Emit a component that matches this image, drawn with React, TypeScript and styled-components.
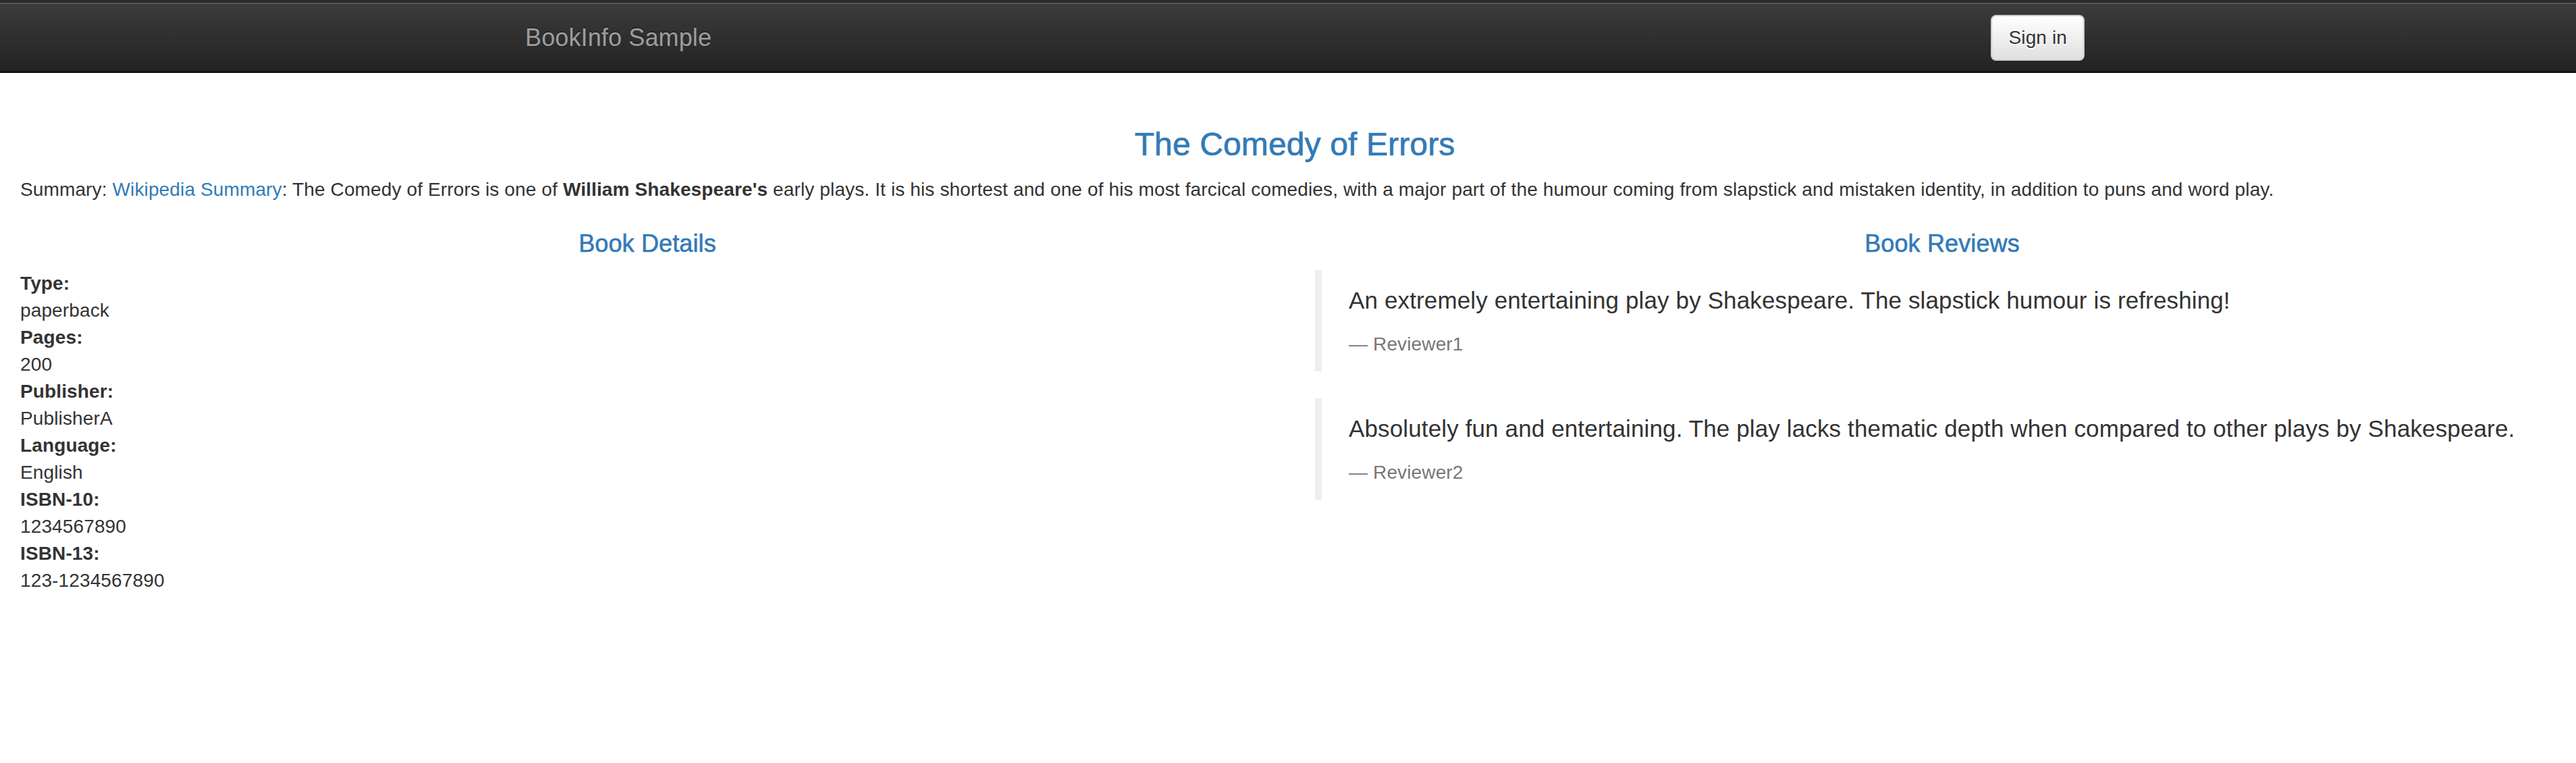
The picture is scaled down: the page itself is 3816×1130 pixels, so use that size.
import React from "react";
import styled, { createGlobalStyle } from "styled-components";

const GlobalStyle = createGlobalStyle`
  html, body {
    margin: 0;
    padding: 0;
    background: #fff;
    overflow-x: hidden;
  }
  body {
    font-family: "Liberation Sans", Arial, Helvetica, sans-serif;
    font-size: 28px;
    line-height: 1.42857143;
    letter-spacing: 0.13px;
    color: #333;
  }
  * { box-sizing: border-box; }
`;

const Page = styled.div`
  width: 3836px;
`;

const Navbar = styled.nav`
  border-top: 4px solid #2b2b2b;
  padding-top: 2px;
  min-height: 104px;
  border-bottom: 2px solid #080808;
  background-image: linear-gradient(to bottom, #3c3c3c 0%, #222 100%);
  box-shadow: inset 0 2px 0 #575757;
  margin-bottom: 40px;
`;

const NavContainer = styled.div`
  width: 2340px;
  margin: 0 auto;
  padding: 0 30px;
  display: flex;
  justify-content: space-between;
  align-items: flex-start;
`;

const Brand = styled.a`
  display: block;
  margin-left: -30px;
  padding: 30px;
  height: 100px;
  font-size: 36px;
  line-height: 40px;
  color: #9d9d9d;
  text-decoration: none;
  text-shadow: 0 -2px 0 rgba(0, 0, 0, 0.25);
`;

const NavRight = styled.div`
  margin-right: -30px;
  padding: 16px 0;
`;

const SignInButton = styled.button`
  font-family: inherit;
  font-size: 28px;
  line-height: 40px;
  letter-spacing: 0.13px;
  padding: 12px 24px;
  color: #333;
  border: 2px solid #ccc;
  border-radius: 8px;
  background-image: linear-gradient(to bottom, #fff 0%, #e0e0e0 100%);
  text-shadow: 0 2px 0 #fff;
  box-shadow: inset 0 2px 0 rgba(255, 255, 255, 0.15), 0 2px 2px rgba(0, 0, 0, 0.075);
  cursor: pointer;
`;

const Main = styled.main`
  display: flow-root;
  padding: 0 30px;
`;

const Title = styled.h3`
  margin: 40px 0 20px;
  font-size: 48px;
  line-height: 1.1;
  font-weight: 500;
  text-align: center;
  color: #337ab7;
  -webkit-text-stroke: 0.7px #337ab7;
`;

const Summary = styled.p`
  margin: 0 0 20px;
`;

const Link = styled.a`
  color: #337ab7;
  text-decoration: none;
`;

const Columns = styled.div`
  display: grid;
  grid-template-columns: 1fr 1fr;
  column-gap: 60px;
`;

const Column = styled.section`
  min-width: 0;
`;

const SectionTitle = styled.h4`
  margin: 20px 0 20px;
  font-size: 36px;
  line-height: 1.1;
  font-weight: 500;
  text-align: center;
  color: #337ab7;
  -webkit-text-stroke: 0.6px #337ab7;
`;

const DetailList = styled.dl`
  margin: 0 0 40px;
`;

const Term = styled.dt`
  font-weight: 700;
  line-height: 1.42857143;
`;

const Value = styled.dd`
  margin: 0;
  line-height: 1.42857143;
`;

const Review = styled.blockquote`
  margin: 0 0 40px;
  padding: 20px 40px;
  border-left: 10px solid #eee;
  font-size: 35px;
`;

const ReviewText = styled.p`
  margin: 0 0 20px;
  line-height: 1.42857143;
`;

const Reviewer = styled.small`
  display: block;
  font-size: 80%;
  line-height: 1.42857143;
  color: #777;
  &::before {
    content: "\\2014 \\00A0";
  }
`;

const details: [string, string][] = [
  ["Type:", "paperback"],
  ["Pages:", "200"],
  ["Publisher:", "PublisherA"],
  ["Language:", "English"],
  ["ISBN-10:", "1234567890"],
  ["ISBN-13:", "123-1234567890"],
];

const reviews = [
  {
    text: "An extremely entertaining play by Shakespeare. The slapstick humour is refreshing!",
    reviewer: "Reviewer1",
  },
  {
    text: "Absolutely fun and entertaining. The play lacks thematic depth when compared to other plays by Shakespeare.",
    reviewer: "Reviewer2",
  },
];

export default function App() {
  return (
    <Page>
      <GlobalStyle />
      <Navbar>
        <NavContainer>
          <Brand href="#">BookInfo Sample</Brand>
          <NavRight>
            <SignInButton type="button">Sign in</SignInButton>
          </NavRight>
        </NavContainer>
      </Navbar>
      <Main>
        <Title>The Comedy of Errors</Title>
        <Summary>
          Summary: <Link href="#">Wikipedia Summary</Link>: The Comedy of Errors is one of{" "}
          <b>William Shakespeare's</b> early plays. It is his shortest and one of his most farcical
          comedies, with a major part of the humour coming from slapstick and mistaken identity, in
          addition to puns and word play.
        </Summary>
        <Columns>
          <Column>
            <SectionTitle>Book Details</SectionTitle>
            <DetailList>
              {details.map(([k, v]) => (
                <React.Fragment key={k}>
                  <Term>{k}</Term>
                  <Value>{v}</Value>
                </React.Fragment>
              ))}
            </DetailList>
          </Column>
          <Column>
            <SectionTitle>Book Reviews</SectionTitle>
            {reviews.map((r) => (
              <Review key={r.reviewer}>
                <ReviewText>{r.text}</ReviewText>
                <Reviewer>{r.reviewer}</Reviewer>
              </Review>
            ))}
          </Column>
        </Columns>
      </Main>
    </Page>
  );
}
